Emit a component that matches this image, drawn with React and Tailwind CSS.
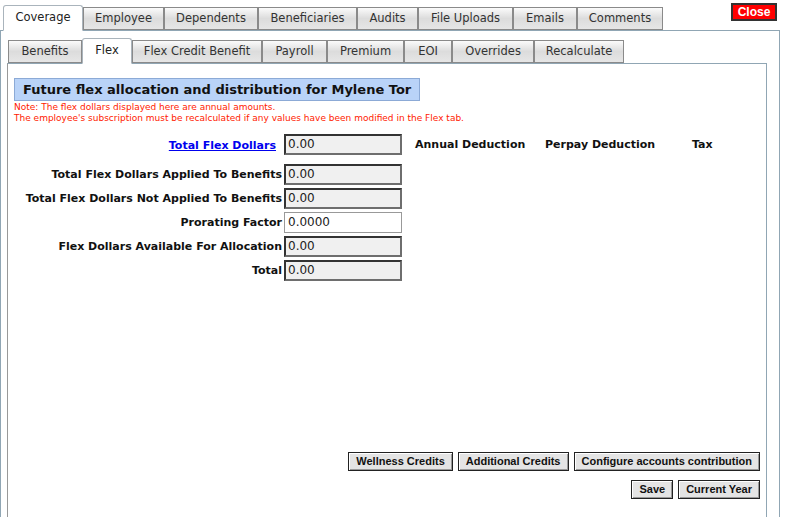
import React from "react";

const outerTabs = [
  { label: "Coverage", w: 80, active: true },
  { label: "Employee", w: 81 },
  { label: "Dependents", w: 94 },
  { label: "Beneficiaries", w: 99 },
  { label: "Audits", w: 61 },
  { label: "File Uploads", w: 95 },
  { label: "Emails", w: 64 },
  { label: "Comments", w: 86 },
];

const innerTabs = [
  { label: "Benefits", w: 74 },
  { label: "Flex", w: 50, active: true },
  { label: "Flex Credit Benefit", w: 130 },
  { label: "Payroll", w: 65 },
  { label: "Premium", w: 77 },
  { label: "EOI", w: 48 },
  { label: "Overrides", w: 82 },
  { label: "Recalculate", w: 90 },
];

function Tab({ label, w, active }) {
  if (active) {
    return (
      <div
        style={{ width: w }}
        className="h-[26px] -mb-px flex items-center justify-center bg-white border border-[#aab4bc] border-b-white rounded-t-[3px] text-[11.5px] text-[#222] relative z-10"
      >
        {label}
      </div>
    );
  }
  return (
    <div
      style={{ width: w }}
      className="h-[23px] flex items-center justify-center border border-[#8a8a8a] bg-gradient-to-b from-[#fbfbfb] via-[#dcdcdc] to-[#e6e6e6] text-[11.5px] text-[#333]"
    >
      {label}
    </div>
  );
}

function Btn({ children }) {
  return (
    <button className="h-[19px] px-[7px] border border-[#222] bg-[#e4e4e4] shadow-[inset_1px_1px_0_#fff,inset_-1px_-1px_0_#999] text-[11px] font-bold text-[#111] leading-none font-['Liberation_Sans',Arial,sans-serif]">
      {children}
    </button>
  );
}

function ReadInput({ value }) {
  return (
    <div className="w-[118px] h-[21px] border-2 border-t-[#333] border-l-[#333] border-b-[#6e6e6e] border-r-[#6e6e6e] bg-[#f0f0f0] text-[12px] text-[#222] pl-[2px] flex items-center">
      {value}
    </div>
  );
}

function Row({ label, value, white }) {
  return (
    <div className="flex items-center h-[24px]">
      <div className="w-[276px] text-right text-[11px] font-bold text-[#111] pr-[2px] pt-[2px]">{label}</div>
      {white ? (
        <div className="w-[118px] h-[21px] border border-[#999] bg-white text-[12px] text-[#222] pl-[3px] flex items-center">
          {value}
        </div>
      ) : (
        <ReadInput value={value} />
      )}
    </div>
  );
}

export default function App() {
  return (
    <div className="w-[788px] h-[517px] bg-white overflow-hidden font-['DejaVu_Sans',Verdana,sans-serif]">
      <div className="flex items-end justify-between pl-[3px] pr-[11px] h-[30px]">
        <div className="flex items-end">
          {outerTabs.map((t) => (
            <Tab key={t.label} {...t} />
          ))}
        </div>
        <button className="self-start mt-[3px] w-[46px] h-[18px] bg-[#f00] border-2 border-[#333] text-white text-[12px] font-bold leading-none font-['Liberation_Sans',Arial,sans-serif]">
          Close
        </button>
      </div>
      <div className="w-[780px] h-[500px] border border-[#90a6b4] pl-[6px] pt-[7px]">
        <div className="flex items-end pl-[1px]">
          {innerTabs.map((t) => (
            <Tab key={t.label} {...t} />
          ))}
        </div>
        <div className="w-[760px] h-[480px] border border-[#90a6b4] border-l-[#999] pl-[6px] pt-[14px] pr-[6px] flex flex-col">
          <div className="self-start h-[23px] bg-[#b9d3f8] border border-[#8caad6] flex items-center px-[8px] text-[13px] font-bold text-[#111] whitespace-nowrap">
            Future flex allocation and distribution for Mylene Tor
          </div>
          <div className="text-[9px] leading-[11px] text-[#ff1a00] mt-[1px]">
            <div>Note: The flex dollars displayed here are annual amounts.</div>
            <div>The employee's subscription must be recalculated if any values have been modified in the Flex tab.</div>
          </div>
          <div className="-ml-[6px] mt-[8px]">
            <div className="flex items-center h-[24px]">
              <div className="w-[276px] text-right pr-[8px]">
                <a href="#" className="text-[11px] font-bold text-[#0000ee] underline">
                  Total Flex Dollars
                </a>
              </div>
              <ReadInput value="0.00" />
              <div className="ml-[13px] w-[130px] text-[11px] font-bold text-[#111] pt-[3px]">Annual Deduction</div>
              <div className="w-[147px] text-[11px] font-bold text-[#111] pt-[3px]">Perpay Deduction</div>
              <div className="text-[11px] font-bold text-[#111] pt-[3px]">Tax</div>
            </div>
            <div className="mt-[6px]">
              <Row label="Total Flex Dollars Applied To Benefits" value="0.00" />
              <Row label="Total Flex Dollars Not Applied To Benefits" value="0.00" />
              <Row label="Prorating Factor" value="0.0000" white />
              <Row label="Flex Dollars Available For Allocation" value="0.00" />
              <Row label="Total" value="0.00" />
            </div>
          </div>
          <div className="mt-[170px] flex justify-end gap-[5px]">
            <Btn>Wellness Credits</Btn>
            <Btn>Additional Credits</Btn>
            <Btn>Configure accounts contribution</Btn>
          </div>
          <div className="mt-[9px] flex justify-end gap-[5px]">
            <Btn>Save</Btn>
            <Btn>Current Year</Btn>
          </div>
        </div>
      </div>
    </div>
  );
}
